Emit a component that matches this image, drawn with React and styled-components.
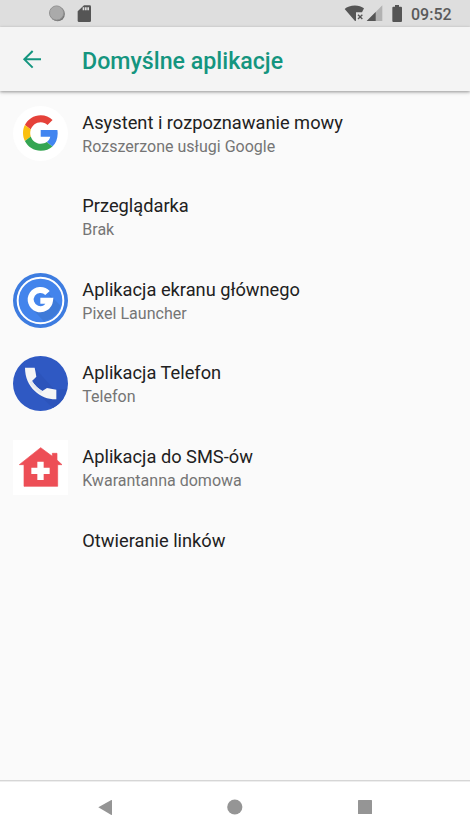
import React from "react";
import styled, { createGlobalStyle } from "styled-components";

const GlobalStyle = createGlobalStyle`
  * { box-sizing: border-box; }
  html, body { margin: 0; padding: 0; background: #fafafa; }
  body { font-family: Roboto, "Noto Sans", sans-serif; overflow: hidden; }
  svg { display: block; flex: none; }
`;

const Screen = styled.div`
  display: flex;
  flex-direction: column;
  width: 470px;
  height: 835px;
  background: #fafafa;
`;

const StatusBar = styled.header`
  display: flex;
  align-items: center;
  justify-content: space-between;
  height: 27px;
  flex: none;
  padding: 0 19px 0 48px;
  background: #dedede;
`;

const StatusGroup = styled.div`
  display: flex;
  align-items: center;
  height: 27px;
`;

const Clock = styled.time`
  width: 40px;
  margin-left: 8px;
  padding-top: 2px;
  font-size: 16px;
  line-height: 25px;
  font-weight: 500;
  color: #5a5a5a;
  white-space: nowrap;
`;

const AppBar = styled.div`
  display: flex;
  align-items: center;
  height: 64px;
  flex: none;
  padding-left: 22px;
  background: #f4f4f4;
  box-shadow: 0 1px 3px rgba(0, 0, 0, 0.38), 0 3px 5px rgba(0, 0, 0, 0.04);
`;

const BackButton = styled.button`
  width: 60px;
  padding: 0;
  border: 0;
  background: none;
`;

const Heading = styled.h1`
  margin: 0;
  padding-top: 4px;
  font-size: 23.2px;
  line-height: 30px;
  font-weight: 500;
  color: #14957f;
  white-space: nowrap;
`;

const List = styled.main`
  flex: 1;
  display: flex;
  flex-direction: column;
  padding-top: 0.6px;
`;

const Row = styled.div`
  display: grid;
  grid-template-columns: 82px 1fr;
  align-items: center;
  height: ${({ $single }) => ($single ? "62px" : "83.5px")};
`;

const IconSlot = styled.div`
  padding-left: 13px;
`;

const Labels = styled.div`
  display: flex;
  flex-direction: column;
  padding: 2px 0 0 0.3px;
`;

const Title = styled.div`
  font-size: 18.25px;
  line-height: 24px;
  color: #212121;
  white-space: nowrap;
`;

const Summary = styled.div`
  font-size: 16.05px;
  line-height: 23px;
  color: #757575;
  white-space: nowrap;
`;

const NavBar = styled.nav`
  display: flex;
  justify-content: center;
  align-items: center;
  height: 55px;
  flex: none;
  padding-bottom: 2px;
  border-top: 1px solid #d6d6d6;
  box-shadow: inset 0 1px 0 #eeeeee;
  background: #fff;
`;

const NavButton = styled.button`
  display: flex;
  justify-content: center;
  width: 130px;
  padding: 0;
  border: 0;
  background: none;
`;

const SyncIcon = () => (
  <svg width="18" height="27" viewBox="0 0 18 27">
    <circle cx="9.6" cy="14" r="7.3" fill="#777" />
    <circle cx="8.6" cy="13" r="7.1" fill="#aaa" stroke="#929292" />
  </svg>
);

const CardIcon = () => (
  <svg width="32" height="27" viewBox="0 0 96 81">
    <path d="M54 16H71Q75 16 75 20V62Q75 66 71 66H39Q35 66 35 62V34Z" fill="#555" />
    <path d="M50 22h5v9h-5zM57 22h5v9h-5zM64 22h5v9h-5z" fill="#dedede" />
  </svg>
);

const WifiIcon = () => (
  <svg width="22" height="27" viewBox="0 0 66 81">
    <path d="M2 27C14 14 46 12 60 25L54 37H36V62L33 63Z" fill="#555" />
    <path d="M42 44l13 13M55 44L42 57" stroke="#555" strokeWidth="4" />
  </svg>
);

const SignalIcon = () => (
  <svg width="18" height="27" viewBox="0 0 54 81">
    <path d="M49 16V63H2Z" fill="#b2b2b2" />
    <path d="M29 36V63H2Z" fill="#555" />
  </svg>
);

const BatteryIcon = () => (
  <svg width="19" height="27" viewBox="0 0 57 81">
    <path d="M33 15H45V20H51Q54 20 54 23V63Q54 66 51 66H28Q25 66 25 63V23Q25 20 28 20H33Z" fill="#555" />
  </svg>
);

const ArrowIcon = () => (
  <svg width="20" height="20" viewBox="0 0 60 60" fill="none" stroke="#14957f" strokeWidth="6">
    <path d="M57 31H7M32 6L7 31L32 56" />
  </svg>
);

const GoogleIcon = () => (
  <svg width="55" height="55" viewBox="0 0 55 55">
    <circle cx="27.5" cy="27.5" r="27.5" fill="#fff" />
    <g transform="translate(10 9.3) scale(.738)">
      <path fill="#e5423a" d="M24 9.5c3.54 0 6.71 1.22 9.21 3.6l6.85-6.85C35.9 2.38 30.47 0 24 0 14.62 0 6.51 5.38 2.56 13.22l7.98 6.19C12.43 13.72 17.74 9.5 24 9.5z" />
      <path fill="#4285f0" d="M46.98 24.55c0-1.57-.15-3.09-.38-4.55H24v9.02h12.94c-.58 2.96-2.26 5.48-4.78 7.18l7.73 6c4.51-4.18 7.09-10.36 7.09-17.65z" />
      <path fill="#fbc010" d="M10.53 28.59c-.48-1.45-.76-2.99-.76-4.59s.27-3.14.76-4.59l-7.98-6.19C.92 16.46 0 20.12 0 24c0 3.88.92 7.54 2.56 10.78l7.97-6.19z" />
      <path fill="#35a552" d="M24 48c6.48 0 11.93-2.13 15.89-5.81l-7.73-6c-2.15 1.45-4.92 2.3-8.16 2.3-6.26 0-11.57-4.22-13.47-9.91l-7.98 6.19C6.51 42.62 14.62 48 24 48z" />
    </g>
  </svg>
);

const LauncherIcon = () => (
  <svg width="55" height="55" viewBox="0 0 165 165">
    <circle cx="82.5" cy="82.5" r="82.5" fill="#3d7ce0" />
    <circle cx="82.5" cy="82.5" r="68.5" fill="#4384ec" stroke="#fff" strokeWidth="6" />
    <path d="M105 60L143 98A64 64 0 0 1 92 144L60 110L110 106L118 82Z" fill="#3e7ad8" />
    <path d="M103.5 60A29 29 0 1 0 111 83H82" fill="none" stroke="#fff" strokeWidth="18" />
  </svg>
);

const PhoneIcon = () => (
  <svg width="55" height="55" viewBox="0 0 165 165">
    <circle cx="82.5" cy="82.5" r="82.5" fill="#2f59c3" />
    <path d="M65 35L150 130A82 82 0 0 1 120 156L55 94L70 62ZM130 101L162 98L150 130L130 130Z" fill="#2c54bb" />
    <path d="M36 35H65Q68 49 70 62L57 75Q69 94 88 105L102 96L130 101V130C83 131 36 94 36 35Z" fill="#f5f5f5" />
    <path d="M57 75Q69 94 88 105L84 113Q60 98 50 79Z" fill="#e4e8ef" />
  </svg>
);

const HomeIcon = () => (
  <svg width="55" height="55" viewBox="0 0 165 165">
    <path fill="#fff" d="M0 0h165v165H0z" />
    <path d="M83 23L118 49V40H132V60L147 74H134V139H33V74H19Z" fill="#ed4e56" stroke="#ed4e56" strokeWidth="2" strokeLinejoin="round" />
    <path d="M73 65H92V83H110V102H92V120H73V102H55V83H73Z" fill="#fff" />
  </svg>
);

const entries = [
  { title: "Asystent i rozpoznawanie mowy", summary: "Rozszerzone usługi Google", Icon: GoogleIcon },
  { title: "Przeglądarka", summary: "Brak" },
  { title: "Aplikacja ekranu głównego", summary: "Pixel Launcher", Icon: LauncherIcon },
  { title: "Aplikacja Telefon", summary: "Telefon", Icon: PhoneIcon },
  { title: "Aplikacja do SMS-ów", summary: "Kwarantanna domowa", Icon: HomeIcon },
  { title: "Otwieranie linków" },
];

export default function App() {
  return (
    <Screen>
      <GlobalStyle />
      <StatusBar>
        <StatusGroup>
          <SyncIcon />
          <CardIcon />
        </StatusGroup>
        <StatusGroup>
          <WifiIcon />
          <SignalIcon />
          <BatteryIcon />
          <Clock>09:52</Clock>
        </StatusGroup>
      </StatusBar>
      <AppBar>
        <BackButton aria-label="Wstecz">
          <ArrowIcon />
        </BackButton>
        <Heading>Domyślne aplikacje</Heading>
      </AppBar>
      <List>
        {entries.map(({ title, summary, Icon }) => (
          <Row key={title} $single={!summary}>
            <IconSlot>{Icon && <Icon />}</IconSlot>
            <Labels>
              <Title>{title}</Title>
              {summary && <Summary>{summary}</Summary>}
            </Labels>
          </Row>
        ))}
      </List>
      <NavBar>
        <NavButton aria-label="Wstecz">
          <svg width="15" height="17" viewBox="0 0 45 51">
            <path d="M1 25L40 3Q42 2 42 5V46Q42 49 40 48Z" fill="#959595" />
          </svg>
        </NavButton>
        <NavButton aria-label="Ekran główny">
          <svg width="16" height="16" viewBox="0 0 16 16">
            <circle cx="7.8" cy="8" r="7.6" fill="#959595" />
          </svg>
        </NavButton>
        <NavButton aria-label="Ostatnie">
          <svg width="14" height="14" viewBox="0 0 14 14">
            <rect width="14" height="14" rx="0.5" fill="#959595" />
          </svg>
        </NavButton>
      </NavBar>
    </Screen>
  );
}
